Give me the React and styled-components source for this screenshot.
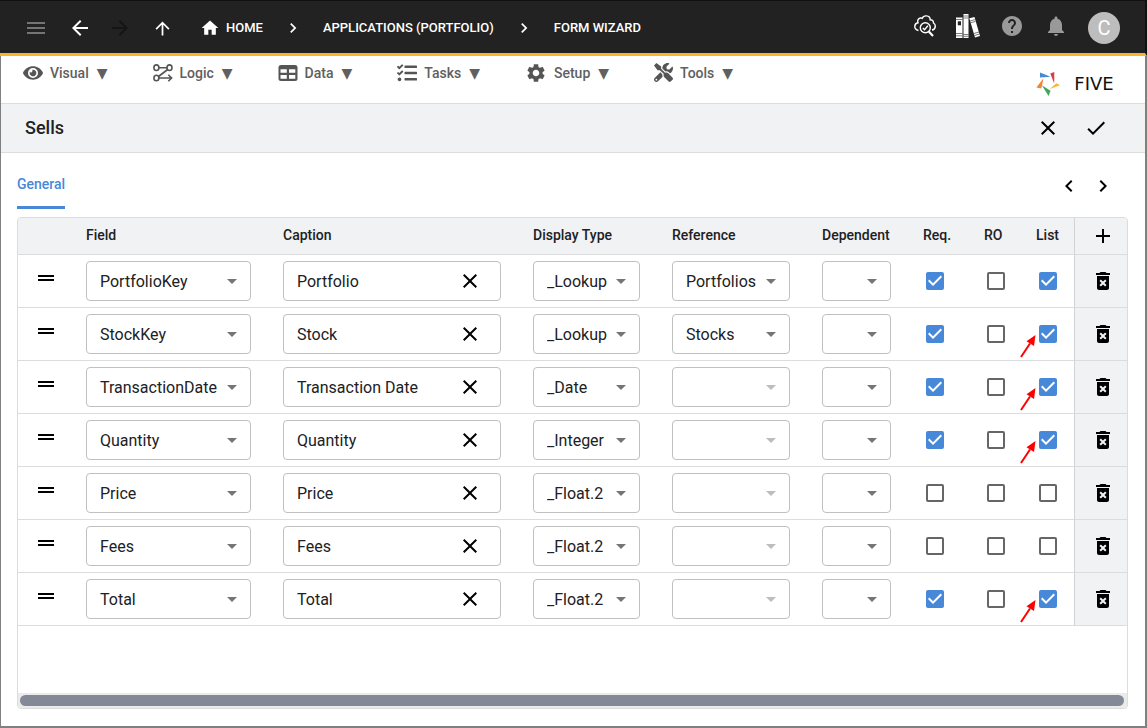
import React, { useState } from 'react'
import styled, { createGlobalStyle } from 'styled-components'
import { FaEye, FaTasks, FaTools } from 'react-icons/fa'
import {
  MdMenu, MdArrowBack, MdArrowForward, MdArrowUpward, MdHome, MdNavigateNext, MdNavigateBefore,
  MdHelp, MdNotifications, MdSettings, MdClose, MdDone, MdAdd, MdDeleteForever, MdDragHandle, MdArrowDropDown
} from 'react-icons/md'

const GlobalStyle = createGlobalStyle`
  * {
    box-sizing: border-box;
  }
  body {
    margin: 0;
    background: #fff;
    font-family: Roboto, 'Liberation Sans', sans-serif;
    color: #202124;
  }
  button, input, select {
    font-family: inherit;
    color: inherit;
  }
  svg {
    display: block;
    flex-shrink: 0;
  }
`

const Page = styled.div`
  min-height: 100vh;
  display: flex;
  flex-direction: column;
`

const IconButton = styled.button`
  display: flex;
  align-items: center;
  justify-content: center;
  padding: 0;
  border: none;
  background: none;
  cursor: pointer;
  color: ${props => props.$color || '#000'};
`

const Header = styled.header`
  display: flex;
  align-items: center;
  justify-content: space-between;
  height: 56px;
  padding: 2px 25px 0 24px;
  background: #222;
  border-top: 1px solid #111;
  border-right: 2px solid #111;
  border-bottom: 3px solid #fbb52b;
`

const HistoryButtons = styled.div`
  display: flex;
  align-items: center;
  gap: 20px;
  margin-right: 27px;
`

const BackForward = styled.div`
  display: flex;
  gap: 16px;
`

const HeaderGroup = styled.div`
  display: flex;
  align-items: center;
`

const Breadcrumb = styled.nav`
  display: flex;
  align-items: center;
  gap: 20px;
  color: #fff;
`

const Crumb = styled.a`
  display: flex;
  align-items: center;
  gap: 6px;
  font-size: 13px;
  font-weight: 500;
  line-height: 20px;
  color: #fff;
  text-decoration: none;
  text-transform: uppercase;
`

const HeaderActions = styled.div`
  display: flex;
  align-items: center;
  gap: 20px;
`

const ActionIcons = styled.div`
  display: flex;
  align-items: center;
  gap: 20px;
  padding-bottom: 4px;
`

const Avatar = styled.button`
  width: 32px;
  height: 32px;
  padding: 0;
  border: none;
  border-radius: 50%;
  background: #bdbdbd;
  color: #fff;
  font-size: 20px;
  line-height: 32px;
`

const Body = styled.main`
  flex: 1;
  display: flex;
  flex-direction: column;
  border: solid #808080;
  border-width: 0 2px 2px 1px;
`

const MenuBar = styled.div`
  display: flex;
  justify-content: space-between;
  height: 48px;
  padding: 0 22px;
  border-bottom: 1px solid #dcdcdc;
`

const Menus = styled.div`
  display: flex;
  align-items: center;
  gap: 45px;
  height: 33px;
`

const MenuButton = styled.button`
  display: flex;
  align-items: center;
  gap: 7px;
  padding: 0;
  border: none;
  background: none;
  color: #606060;
  font-size: 14px;
  font-weight: 500;
  line-height: 20px;
  cursor: pointer;
  svg {
    color: #555;
  }
`

const MenuArrow = styled.span`
  margin-left: 1px;
  font-family: 'DejaVu Sans', sans-serif;
  font-weight: 400;
`

const Logo = styled.a`
  display: flex;
  align-items: center;
  gap: 5px;
  align-self: flex-end;
  height: 38px;
  color: #111;
  font-family: 'DejaVu Sans', sans-serif;
  font-size: 18px;
  line-height: 24px;
  text-decoration: none;
  span {
    min-width: 58px;
    text-align: center;
  }
`

const TitleBar = styled.div`
  display: flex;
  align-items: center;
  justify-content: space-between;
  height: 49px;
  padding: 0 37px 0 24px;
  background: #f1f2f4;
  border-bottom: 1px solid #dcdcdc;
`

const Title = styled.h1`
  margin: 0;
  font-size: 18px;
  font-weight: 500;
  line-height: 24px;
`

const TitleActions = styled.div`
  display: flex;
  gap: 24px;
`

const TabBar = styled.div`
  display: flex;
  justify-content: space-between;
  height: 56px;
  margin: 0 30px 8px 16px;
`

const Tab = styled.button`
  padding: 9px 0 0;
  border: none;
  border-bottom: 3px solid #4788d8;
  background: none;
  color: #4788d8;
  font-size: 14px;
  font-weight: 500;
  line-height: 20px;
`

const TabArrows = styled.div`
  display: flex;
  align-items: center;
  gap: 10px;
  padding-top: 10px;
`

const Panel = styled.section`
  flex: 1;
  display: flex;
  flex-direction: column;
  justify-content: space-between;
  margin: 0 17px 17px 16px;
  border: 1px solid #dcdcdc;
  border-radius: 4px;
  overflow: hidden;
`

const Table = styled.table`
  width: 100%;
  table-layout: fixed;
  border-collapse: separate;
  border-spacing: 0;
`

const Col = styled.col`
  width: ${props => props.$width};
`

const Th = styled.th`
  height: 37px;
  padding: 0 0 2px 16px;
  background: #f1f2f4;
  border-bottom: 1px solid #dcdcdc;
  font-size: 14px;
  font-weight: 500;
  line-height: 20px;
  text-align: left;
  white-space: nowrap;
`

const Td = styled.td`
  position: relative;
  height: 53px;
  padding: 0 16px;
  border-bottom: 1px solid #dcdcdc;
`

const HandleCell = styled(Td)`
  padding-bottom: 6px;
`

const CheckCell = styled(Td)`
  padding: 0 0 0 19px;
`

const ActionCell = styled(Td)`
  padding: 0 0 0 16px;
  background: #f1f2f4;
  border-left: 1px solid #d3d3d3;
`

const ActionHead = styled(Th)`
  padding-bottom: 0;
  border-left: 1px solid #d3d3d3;
`

const SelectBox = styled.div`
  position: relative;
  svg {
    position: absolute;
    top: 8px;
    right: 7px;
    pointer-events: none;
    color: ${props => props.$disabled ? '#bdbdbd' : '#757575'};
  }
`

const Select = styled.select`
  display: block;
  width: 100%;
  height: 40px;
  padding: 0 24px 0 13px;
  appearance: none;
  border: 1px solid #c0c0c0;
  border-radius: 4px;
  background: #fff;
  font-size: 16px;
  opacity: 1;
`

const InputBox = styled.div`
  display: flex;
  align-items: center;
  height: 40px;
  padding: 0 18px 0 13px;
  border: 1px solid #c0c0c0;
  border-radius: 4px;
`

const Input = styled.input`
  flex: 1;
  min-width: 0;
  height: 24px;
  padding: 0;
  border: none;
  outline: none;
  background: none;
  font-size: 16px;
`

const CheckBox = styled.label`
  position: relative;
  display: block;
  width: 18px;
  height: 18px;
  input {
    display: block;
    width: 18px;
    height: 18px;
    margin: 0;
    appearance: none;
    border: 2px solid #666;
    border-radius: 2px;
    background: #fff;
  }
  input:checked {
    border-color: #4788d8;
    background: #4788d8;
  }
  svg {
    position: absolute;
    top: -3px;
    left: -3px;
    pointer-events: none;
  }
`

const Pointer = styled.svg`
  position: absolute;
  top: 26px;
  left: 0;
  pointer-events: none;
`

const ScrollTrack = styled.div`
  height: 15px;
  padding: 2px 3px 2px 2px;
  background: #ebebeb;
`

const ScrollThumb = styled.div`
  height: 11px;
  border-radius: 6px;
  background: #848998;
`

const CloudIcon = () => (
  <svg width="24" height="24" viewBox="0 0 24 24" fill="none" stroke="#fff" strokeWidth="1.400">
    <path d="M6.500 16.500C4 16 2.700 14.300 2.800 12.300C2.900 10.400 4.200 9 6 8.700C5.200 6.500 6.300 4.400 8.300 4C9.200 3.800 9.800 4 10.300 4.300C11 2.500 12.600 1.700 14.500 1.900C16.800 2.100 18.200 3.700 18.200 5.800C20.200 5.700 21.600 7 21.500 9C23 9.900 23.500 11.200 23.200 13C22.800 14.700 21.800 15.800 20 16" />
    <circle cx="13.300" cy="13.800" r="5" />
    <path d="M16.800 17.500L21 22" strokeWidth="2.200" />
    <path d="M10.800 14L12.600 15.800L15.800 11.800" strokeWidth="1.400" />
  </svg>
)

const BooksIcon = () => (
  <svg width="24" height="24" viewBox="0 0 24 24">
    <path fill="#fff" d="M0 3.500h6.500v20.500H0zM7.500 0h5v24h-5zM13.300 4.300l5.200-1.400L24 22l-5 1.500z" />
    <path fill="#222" d="M1.800 7.300h3.200v4H1.800z" />
    <path stroke="#222" strokeWidth="0.600" d="M0 5.500h6.500M0 19.500h6.500M0 21.800h6.500M7.500 2h5M7.500 4h5M7.500 20.500h5M7.500 22.300h5M14 7l5.200-1.400M14.600 8.800l5-1.400M17.800 19.500l5.200-1.500M18.400 21.500l5-1.500" />
  </svg>
)

const LogicIcon = () => (
  <svg width="20" height="18" viewBox="0 0 20 18" fill="none" stroke="currentColor" strokeWidth="1.600">
    <ellipse cx="3.400" cy="3.700" rx="2.500" ry="2.800" />
    <ellipse cx="16.500" cy="3.700" rx="2.500" ry="2.800" />
    <ellipse cx="3.400" cy="14" rx="2.500" ry="2.800" />
    <path d="M6 3.700h8M14.700 5.500L5.500 12.500M6 14h12.500M15.300 10.800l3.300 3.200l-3.300 3.200" />
  </svg>
)

const DataIcon = () => (
  <svg width="20" height="18" viewBox="0 0 20 18">
    <rect x="0.500" y="1" width="19" height="16" rx="2.500" fill="currentColor" />
    <path fill="#fff" d="M2.500 5.300h6.300v3.500H2.500zM11 5.300h6.300v3.500H11zM2.500 11h6.300v3.700H2.500zM11 11h6.300v3.700H11z" />
  </svg>
)

const LogoIcon = () => (
  <svg width="24" height="24" viewBox="0 0 24 24">
    <path fill="#4788d8" d="M4 .6L14.600 4.800L4 5.600z" />
    <path fill="#e03a3a" d="M14.300 1.400L18.300 0L18.200 11.500z" />
    <path fill="#fbb52b" d="M13.800 17L20.500 11.200L24 13.300z" />
    <path fill="#3fa75a" d="M5.800 13.300L14.500 18.700L12.600 24z" />
    <path fill="#f58233" d="M7.500 6.300L5.300 16.500L.4 15.500z" />
  </svg>
)

const menus = [
  { name: 'Visual', icon: <FaEye size={20} /> },
  { name: 'Logic', icon: <LogicIcon /> },
  { name: 'Data', icon: <DataIcon /> },
  { name: 'Tasks', icon: <FaTasks size={20} /> },
  { name: 'Setup', icon: <MdSettings size={22} /> },
  { name: 'Tools', icon: <FaTools size={19} /> }
]

const widths = ['52px', '197px', 'auto', '139px', '150px', '101px', '61px', '52px', '54px', '53px']
const heads = ['', 'Field', 'Caption', 'Display Type', 'Reference', 'Dependent', 'Req.', 'RO', 'List']

const initialRows = [
  { field: 'PortfolioKey', caption: 'Portfolio', type: '_Lookup', reference: 'Portfolios', req: true, ro: false, list: true },
  { field: 'StockKey', caption: 'Stock', type: '_Lookup', reference: 'Stocks', req: true, ro: false, list: true, pointer: true },
  { field: 'TransactionDate', caption: 'Transaction Date', type: '_Date', req: true, ro: false, list: true, pointer: true },
  { field: 'Quantity', caption: 'Quantity', type: '_Integer', req: true, ro: false, list: true, pointer: true },
  { field: 'Price', caption: 'Price', type: '_Float.2', req: false, ro: false, list: false },
  { field: 'Fees', caption: 'Fees', type: '_Float.2', req: false, ro: false, list: false },
  { field: 'Total', caption: 'Total', type: '_Float.2', req: true, ro: false, list: true, pointer: true }
]

function Dropdown({ label, value, disabled }) {
  return (
    <SelectBox $disabled={disabled}>
      <Select aria-label={label} defaultValue={value || ''} disabled={disabled}>
        <option>{value || ''}</option>
      </Select>
      <MdArrowDropDown size={24} />
    </SelectBox>
  )
}

function Check({ label, checked, onChange }) {
  return (
    <CheckBox>
      <input type="checkbox" aria-label={label} checked={checked} onChange={onChange} />
      {checked &&
        <svg width="24" height="24" viewBox="0 0 24 24">
          <path fill="#fff" d="M10 17l-5-5 1.410-1.410L10 14.170l7.590-7.590L19 8l-9 9z" />
        </svg>}
    </CheckBox>
  )
}

function FieldRow({ row, onChange, onDelete }) {
  return (
    <tr>
      <HandleCell><MdDragHandle size={24} color="#000" /></HandleCell>
      <Td><Dropdown label="Field" value={row.field} /></Td>
      <Td>
        <InputBox>
          <Input aria-label="Caption" value={row.caption} onChange={e => onChange({ caption: e.target.value })} />
          <IconButton aria-label="Clear caption" onClick={() => onChange({ caption: '' })}><MdClose size={24} /></IconButton>
        </InputBox>
      </Td>
      <Td><Dropdown label="Display Type" value={row.type} /></Td>
      <Td><Dropdown label="Reference" value={row.reference} disabled={!row.reference} /></Td>
      <Td><Dropdown label="Dependent" /></Td>
      <CheckCell><Check label="Required" checked={row.req} onChange={() => onChange({ req: !row.req })} /></CheckCell>
      <CheckCell><Check label="Read only" checked={row.ro} onChange={() => onChange({ ro: !row.ro })} /></CheckCell>
      <CheckCell>
        <Check label="List" checked={row.list} onChange={() => onChange({ list: !row.list })} />
        {row.pointer &&
          <Pointer width="17" height="24" viewBox="0 0 17 24">
            <path d="M1 23L10 9.500" stroke="#f00" strokeWidth="2" />
            <path d="M15.500 1L6.500 7.200L14 12z" fill="#f00" />
          </Pointer>}
      </CheckCell>
      <ActionCell>
        <IconButton aria-label="Delete row" onClick={onDelete}><MdDeleteForever size={24} /></IconButton>
      </ActionCell>
    </tr>
  )
}

function App() {
  const [rows, setRows] = useState(initialRows)

  const updateRow = (index, change) => {
    setRows(rows.map((row, i) => i === index ? { ...row, ...change } : row))
  }

  const addRow = () => {
    setRows([...rows, { field: '', caption: '', type: '', req: false, ro: false, list: false }])
  }

  return (
    <Page>
      <GlobalStyle />
      <Header>
        <HeaderGroup>
          <HistoryButtons>
            <IconButton aria-label="Menu" $color="#757575"><MdMenu size={24} /></IconButton>
            <BackForward>
              <IconButton aria-label="Back" $color="#fff"><MdArrowBack size={24} /></IconButton>
              <IconButton aria-label="Forward" $color="#151515"><MdArrowForward size={24} /></IconButton>
            </BackForward>
            <IconButton aria-label="Up" $color="#fff"><MdArrowUpward size={21} /></IconButton>
          </HistoryButtons>
          <Breadcrumb>
            <Crumb href="#home"><MdHome size={20} />Home</Crumb>
            <MdNavigateNext size={20} />
            <Crumb href="#applications">Applications (Portfolio)</Crumb>
            <MdNavigateNext size={20} />
            <Crumb href="#wizard">Form Wizard</Crumb>
          </Breadcrumb>
        </HeaderGroup>
        <HeaderActions>
          <ActionIcons>
            <IconButton aria-label="Inspect"><CloudIcon /></IconButton>
            <IconButton aria-label="Library"><BooksIcon /></IconButton>
            <IconButton aria-label="Help" $color="#999"><MdHelp size={24} /></IconButton>
            <IconButton aria-label="Notifications" $color="#999"><MdNotifications size={24} /></IconButton>
          </ActionIcons>
          <Avatar>C</Avatar>
        </HeaderActions>
      </Header>
      <Body>
        <MenuBar>
          <Menus>
            {menus.map(menu => (
              <MenuButton key={menu.name}>{menu.icon}<span>{menu.name}</span><MenuArrow>▼</MenuArrow></MenuButton>
            ))}
          </Menus>
          <Logo href="#five"><LogoIcon /><span>FIVE</span></Logo>
        </MenuBar>
        <TitleBar>
          <Title>Sells</Title>
          <TitleActions>
            <IconButton aria-label="Cancel"><MdClose size={24} /></IconButton>
            <IconButton aria-label="Save"><MdDone size={24} /></IconButton>
          </TitleActions>
        </TitleBar>
        <TabBar>
          <Tab>General</Tab>
          <TabArrows>
            <IconButton aria-label="Previous"><MdNavigateBefore size={24} /></IconButton>
            <IconButton aria-label="Next"><MdNavigateNext size={24} /></IconButton>
          </TabArrows>
        </TabBar>
        <Panel>
          <Table>
            <colgroup>
              {widths.map((width, i) => <Col key={i} $width={width} />)}
            </colgroup>
            <thead>
              <tr>
                {heads.map((head, i) => <Th key={i}>{head}</Th>)}
                <ActionHead><IconButton aria-label="Add row" onClick={addRow}><MdAdd size={24} /></IconButton></ActionHead>
              </tr>
            </thead>
            <tbody>
              {rows.map((row, index) => (
                <FieldRow
                  key={index}
                  row={row}
                  onChange={change => updateRow(index, change)}
                  onDelete={() => setRows(rows.filter((_, i) => i !== index))}
                />
              ))}
            </tbody>
          </Table>
          <ScrollTrack><ScrollThumb /></ScrollTrack>
        </Panel>
      </Body>
    </Page>
  )
}

export default App
